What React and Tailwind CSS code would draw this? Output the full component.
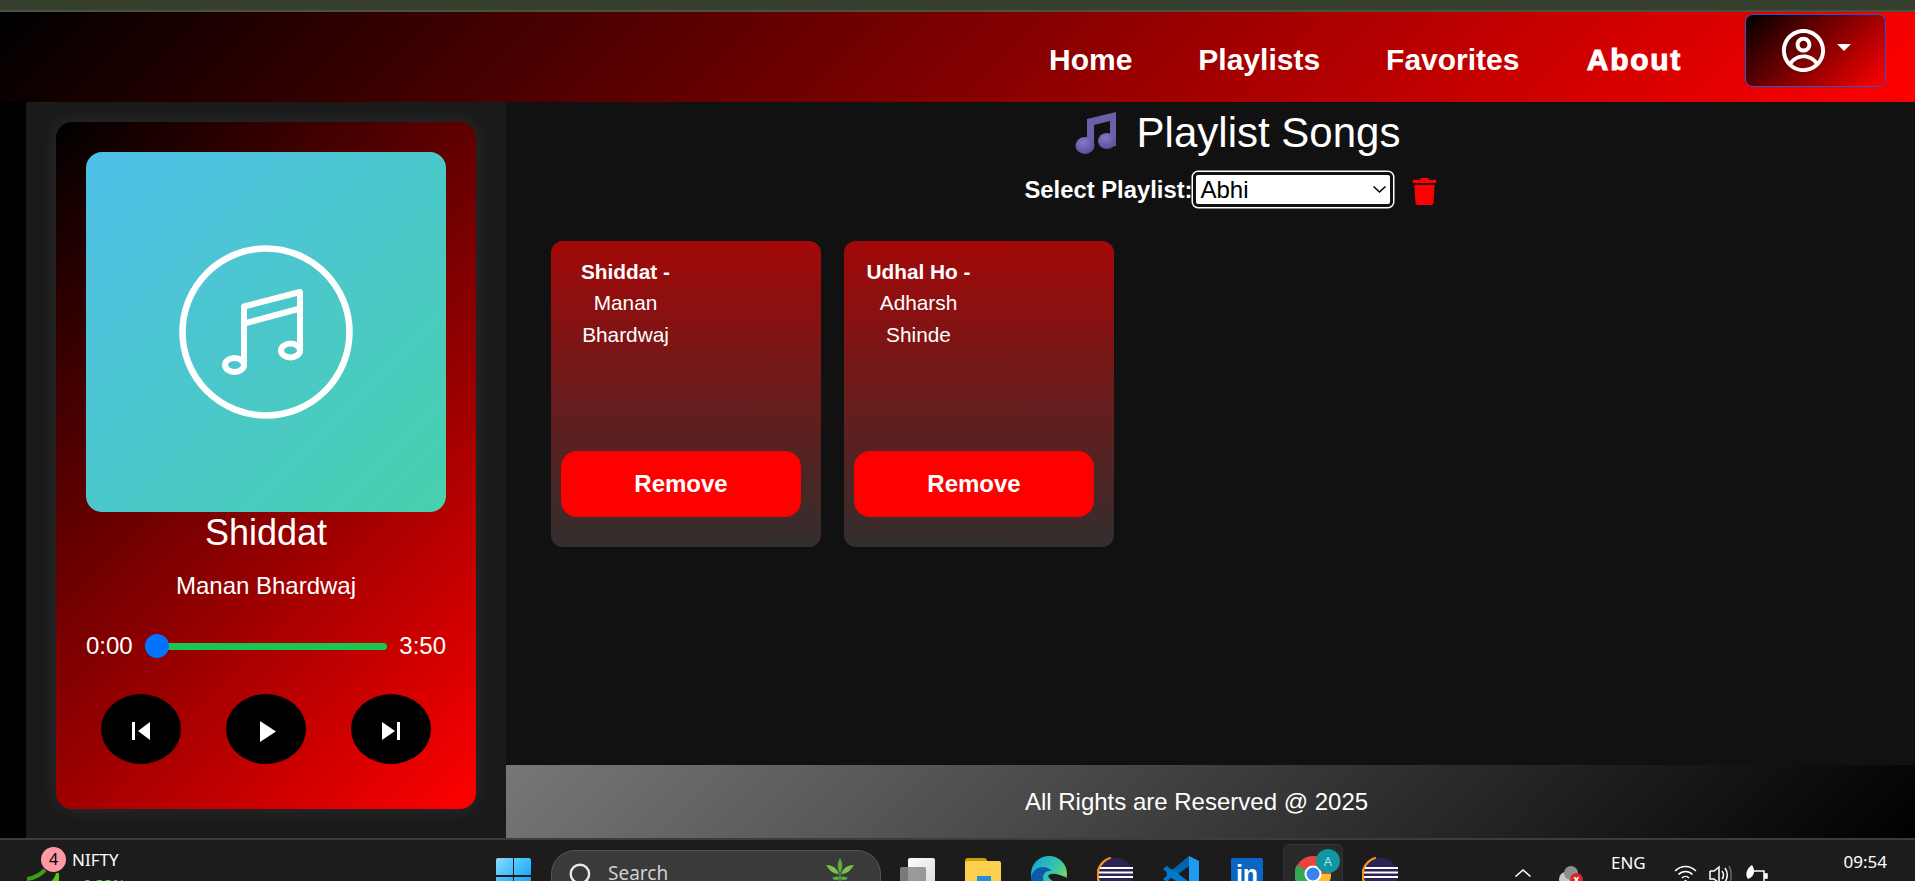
import { CgProfile } from "react-icons/cg";
import { FaTrash } from "react-icons/fa";

const songs = [
  { title: "Shiddat", artist: "Manan Bhardwaj" },
  { title: "Udhal Ho", artist: "Adharsh Shinde" },
];

function AlbumIcon() {
  return (
    <svg viewBox="0 0 180 180" className="w-[180px] h-[180px]" fill="none" stroke="white" strokeLinejoin="round">
      <circle cx="90" cy="90" r="83.5" strokeWidth="6.5" />
      <path d="M68 121 V64.5 L124 50 V108 M68 81.5 L124 66.5" strokeWidth="6" />
      <ellipse cx="58.5" cy="123" rx="9.5" ry="7" strokeWidth="6" />
      <ellipse cx="114.5" cy="108.5" rx="9.5" ry="7" strokeWidth="6" />
    </svg>
  );
}

function NoteEmoji() {
  return (
    <svg viewBox="0 0 41 42" className="w-[41px] h-[42px] shrink-0">
      <defs>
        <radialGradient id="head" cx="0.4" cy="0.3" r="0.8">
          <stop offset="0" stopColor="#8278c4" />
          <stop offset="1" stopColor="#544a94" />
        </radialGradient>
      </defs>
      <path d="M12 7 L41 0 V34 H35 V9 L19 13 V36 H12 Z" fill="#6a5fa8" />
      <ellipse cx="10" cy="33.5" rx="9.5" ry="8.5" fill="url(#head)" />
      <ellipse cx="32" cy="29" rx="9" ry="8" fill="url(#head)" />
    </svg>
  );
}

function Eclipse() {
  return (
    <svg viewBox="0 0 36 36" className="w-[36px] h-[36px]">
      <path d="M14 1 A17.5 17.5 0 0 0 14 35" fill="none" stroke="#f7941e" strokeWidth="2.5" />
      <circle cx="19" cy="18" r="17" fill="#2c2255" />
      <rect x="3" y="10" width="33" height="2" fill="#fff" />
      <rect x="2" y="14.5" width="34" height="2" fill="#fff" />
      <rect x="2" y="19" width="34" height="2" fill="#fff" />
    </svg>
  );
}

function Taskbar() {
  return (
    <div className="h-[43px] shrink-0 flex items-start overflow-hidden bg-[#1c1c1c] border-t-2 border-[#3c3c3c] font-['Noto_Sans','Open_Sans',sans-serif] text-white">
      {/* stock widget */}
      <div className="relative ml-[27px] w-[105px] h-[41px] shrink-0">
        <svg viewBox="0 0 36 14" className="absolute left-0 top-[28px] w-[36px] h-[14px]" fill="none" stroke="#3aa012" strokeWidth="4">
          <path d="M0 11 C8 10 13 7 18 2" />
          <path d="M23 14 C26 12 28 9 29 5 H32 V14 Z" fill="#5fc21a" stroke="none" />
        </svg>
        <span className="absolute left-[14px] top-[7px] w-[25px] h-[25px] rounded-full bg-[#ff99a4] text-black text-[16px] leading-[25px] text-center">4</span>
        <span className="absolute left-[45px] top-[8px] text-[17px] leading-[24px]">NIFTY</span>
        <span className="absolute left-[56px] top-[34px] text-[15px] leading-[20px] text-[#6cc644]">0.33%</span>
      </div>

      {/* start */}
      <div className="ml-[364px] mt-[18px] w-[35px] shrink-0 grid grid-cols-2 gap-[1.5px]">
        <div className="h-[17px] rounded-tl-[2px] bg-[linear-gradient(135deg,#8ddcff,#37b8fb)]" />
        <div className="h-[17px] rounded-tr-[2px] bg-[linear-gradient(135deg,#5cd0ff,#1ea7fd)]" />
        <div className="h-[17px] bg-[linear-gradient(135deg,#4cc6fd,#1c9ff8)]" />
        <div className="h-[17px] bg-[linear-gradient(135deg,#3bb8fc,#1590f0)]" />
      </div>

      {/* search */}
      <div className="ml-[20px] mt-[10px] w-[330px] h-[60px] shrink-0 flex items-start rounded-[24px] bg-[#3a3a3a] border border-[#555]">
        <svg viewBox="0 0 24 24" className="ml-[16px] mt-[11px] w-[26px] h-[26px]" fill="none" stroke="#e8e8e8" strokeWidth="2.2">
          <circle cx="11" cy="11" r="8.5" />
          <path d="M17 17 L22 22" />
        </svg>
        <span className="ml-[14px] mt-[8px] text-[19px] leading-[28px] text-[#d0d0d0]">Search</span>
        <svg viewBox="0 0 28 26" className="ml-[158px] mt-[7px] w-[28px] h-[26px]" fill="#5ca83a">
          <path d="M14 0 C17 5 17 10 14 16 C11 10 11 5 14 0 Z" />
          <path d="M0 7 C6 7 11 10 13 16 C7 16 3 12 0 7 Z" fill="#7cc04f" />
          <path d="M28 7 C22 7 17 10 15 16 C21 16 25 12 28 7 Z" fill="#7cc04f" />
          <path d="M13 16 H15 V26 H13 Z" fill="#4c8a2e" />
          <path d="M6 20 C9 18 12 18 14 20 C11 23 9 23 6 20 Z" />
          <path d="M22 20 C19 18 16 18 14 20 C17 23 19 23 22 20 Z" />
        </svg>
      </div>

      {/* task view */}
      <div className="relative ml-[19px] mt-[18px] w-[35px] h-[30px] shrink-0">
        <div className="absolute left-[8px] top-0 w-[27px] h-[30px] rounded-[2px] bg-[linear-gradient(135deg,#fff,#d8d8d8)]" />
        <div className="absolute left-0 top-[9px] w-[26px] h-[24px] rounded-[2px] bg-[#8a8a8a]/85" />
      </div>

      {/* folder */}
      <div className="relative ml-[30px] mt-[18px] w-[36px] h-[30px] shrink-0">
        <div className="absolute left-0 top-0 w-[22px] h-[10px] rounded-t-[3px] bg-[#d99a0a]" />
        <div className="absolute left-0 top-[3px] w-[36px] h-[27px] rounded-[2px] bg-[#fdd04f]" />
        <div className="absolute left-[12px] top-[18px] w-[14px] h-[8px] bg-[#2a8fd8]" />
      </div>

      {/* edge */}
      <svg viewBox="0 0 36 36" className="ml-[30px] mt-[16px] w-[36px] h-[36px] shrink-0">
        <defs>
          <linearGradient id="edge" x1="0" y1="0" x2="1" y2="0.6">
            <stop offset="0" stopColor="#0fa5d8" />
            <stop offset="0.6" stopColor="#35c1b0" />
            <stop offset="1" stopColor="#7cdc5a" />
          </linearGradient>
        </defs>
        <circle cx="18" cy="18" r="18" fill="url(#edge)" />
        <path d="M0 22 C2 10 14 8 21 15 C16 14 12 17 12 22 C12 28 16 33 22 36 H14 C6 34 0 30 0 22 Z" fill="#0c59a4" />
        <path d="M17 20 C20 16 28 18 36 22 V25 C30 28 20 27 17 20 Z" fill="#1c1c1c" />
      </svg>

      <div className="ml-[30px] mt-[17px] shrink-0"><Eclipse /></div>

      {/* vs code */}
      <svg viewBox="0 0 36 36" className="ml-[30px] mt-[16px] w-[36px] h-[36px] shrink-0">
        <path d="M26 0 L36 5 V31 L26 36 Z" fill="#1f9cf0" />
        <path d="M26 0 V10 L9 23 L3 19 Z" fill="#0065a9" />
        <path d="M26 36 V26 L9 13 L3 17 Z" fill="#007acc" />
        <path d="M0 13 L4 10 L12 17 L4 26 L0 23 L6 18 Z" fill="#0078c8" />
      </svg>

      {/* linkedin */}
      <div className="ml-[32px] mt-[18px] w-[32px] h-[32px] shrink-0 rounded-[2px] bg-[#0a66c2] text-center font-['Liberation_Sans',sans-serif] font-bold text-[25px] leading-[32px]">in</div>

      {/* chrome, active */}
      <div className="relative ml-[20px] mt-[4px] w-[60px] h-[50px] shrink-0 rounded-[6px] bg-[#292929] border border-[#333]">
        <svg viewBox="0 0 36 36" className="absolute left-[11px] top-[11px] w-[36px] h-[36px]">
          <circle cx="18" cy="18" r="18" fill="#e8453c" />
          <path d="M18 18 L2 9 A18 18 0 0 0 14 36 Z" fill="#34a853" />
          <path d="M18 18 H36 A18 18 0 0 1 14 36 Z" fill="#fbc02d" />
          <circle cx="18" cy="18" r="8.5" fill="#fff" />
          <circle cx="18" cy="18" r="6.5" fill="#3b82f0" />
        </svg>
        <span className="absolute left-[32px] top-[4px] w-[24px] h-[24px] rounded-full bg-[#0f96a0] text-[#a8e0e4] text-[13px] leading-[24px] text-center">A</span>
      </div>

      <div className="ml-[19px] mt-[17px] shrink-0"><Eclipse /></div>

      {/* tray */}
      <svg viewBox="0 0 16 8" className="ml-[117px] mt-[29px] w-[16px] h-[8px] shrink-0" fill="none" stroke="white" strokeWidth="1.5">
        <path d="M0.5 7.5 L8 1 L15.5 7.5" />
      </svg>
      <div className="relative ml-[28px] mt-[26px] w-[24px] h-[20px] shrink-0">
        <div className="absolute left-0 top-[6px] w-[16px] h-[14px] rounded-full bg-[#c9c9c9]" />
        <div className="absolute left-[5px] top-0 w-[14px] h-[14px] rounded-full bg-[#8f8f8f]" />
        <div className="absolute left-[11px] top-[7px] w-[13px] h-[13px] rounded-full bg-[#d9252f] text-white text-[10px] leading-[12px] text-center font-bold">x</div>
      </div>
      <div className="ml-[28px] mt-[11px] w-[34px] shrink-0 text-[17px] leading-[24px] text-center">
        <div>ENG</div>
        <div>IN</div>
      </div>
      <svg viewBox="0 0 23 18" className="ml-[29px] mt-[25px] w-[23px] h-[18px] shrink-0" fill="none" stroke="white" strokeWidth="1.6">
        <path d="M1 6 C7 0 16 0 22 6" />
        <path d="M4.5 9.5 C8.5 5.5 14.5 5.5 18.5 9.5" />
        <path d="M8 13 C10 11 13 11 15 13" />
        <circle cx="11.5" cy="16" r="1.2" fill="white" stroke="none" />
      </svg>
      <svg viewBox="0 0 23 18" className="ml-[12px] mt-[25px] w-[23px] h-[18px] shrink-0" fill="none" stroke="white" strokeWidth="1.5">
        <path d="M1 6 H5 L10 2 V18 M1 6 V14 H5 L10 18" />
        <path d="M13 6 C15 8 15 12 13 14" />
        <path d="M16 3 C19 7 19 13 16 17" />
        <path d="M20 1 C23 6 23 14 20 19" stroke="#666" />
      </svg>
      <svg viewBox="0 0 24 18" className="ml-[13px] mt-[25px] w-[24px] h-[18px] shrink-0" fill="none" stroke="white" strokeWidth="1.5">
        <path d="M9 6 H19 V17 H4" />
        <path d="M19 9 H22 V13 H19" fill="white" />
        <path d="M7 0 C1 4 0 10 3 14 C9 12 11 6 7 0 Z" fill="white" stroke="none" />
      </svg>
      <div className="ml-auto mr-[28px] mt-[10px] shrink-0 text-right text-[17px] leading-[24px]">
        <div>09:54</div>
        <div className="mt-[4px]">01-07-2025</div>
      </div>
    </div>
  );
}

export default function App() {
  return (
    <div className="h-screen flex flex-col overflow-hidden bg-black text-white font-['Liberation_Sans',Arial,sans-serif]">
      <div className="h-[10px] shrink-0 bg-[#363f2e]" />
      <div className="h-[2px] shrink-0 bg-[#4a5240]" />

      {/* navbar */}
      <div className="h-[90px] shrink-0 flex items-start justify-end gap-[66px] pr-[29px] bg-[linear-gradient(135deg,#000,#f00)] text-[30px] font-bold">
        <a className="mt-[25px]">Home</a>
        <a className="mt-[25px]">Playlists</a>
        <a className="mt-[25px]">Favorites</a>
        <a className="mt-[25px] ml-[1.4px] tracking-[1.7px] [-webkit-text-stroke:1px_white]">About</a>
        <button className="-ml-[3px] mt-[2px] w-[141px] h-[73px] flex items-center justify-center gap-[10px] rounded-[8px] border-[1.5px] border-[#2b55c8] bg-[linear-gradient(135deg,#000,#f00)]">
          <CgProfile size={47} />
          <span className="-mt-[6px] border-t-[7px] border-x-[7px] border-x-transparent border-t-white" />
        </button>
      </div>

      <div className="flex-1 min-h-0 flex">
        <div className="w-[26px] shrink-0 bg-black" />

        {/* player */}
        <div className="w-[480px] shrink-0 bg-[#1a1a1a] px-[30px] pt-[20px]">
          <div className="h-[687px] rounded-[16px] p-[30px] bg-[linear-gradient(135deg,#000,#f00)] shadow-[0_0_20px_rgba(255,255,255,0.08)]">
            <div className="h-[360px] rounded-[16px] flex items-center justify-center bg-[linear-gradient(135deg,#4fbfe9,#47d0ad)]">
              <AlbumIcon />
            </div>
            <div className="h-[42px] text-center text-[36px] leading-[42px]">Shiddat</div>
            <div className="mt-[16px] h-[32px] text-center text-[24px] leading-[32px]">Manan Bhardwaj</div>
            <div className="mt-[32px] h-[24px] flex items-center justify-between text-[24px]">
              <span>0:00</span>
              <div className="relative w-[242px] h-[7px] rounded-full bg-[#17c653]">
                <div className="absolute left-0 top-[-8.5px] w-[24px] h-[24px] rounded-full bg-[#0073ff]" />
              </div>
              <span>3:50</span>
            </div>
            <div className="mt-[36px] px-[15px] flex justify-between">
              <button className="w-[80px] h-[70px] rounded-[50%] bg-black flex items-center justify-center">
                <svg viewBox="0 0 18 18" className="mt-[4px] w-[18px] h-[18px]" fill="white">
                  <rect x="0" y="0" width="3" height="18" />
                  <path d="M18 0 V18 L6 9 Z" />
                </svg>
              </button>
              <button className="w-[80px] h-[70px] rounded-[50%] bg-black flex items-center justify-center">
                <svg viewBox="0 0 16 21" className="ml-[3px] mt-[4px] w-[16px] h-[21px]" fill="white">
                  <path d="M0 0 L16 10.5 L0 21 Z" />
                </svg>
              </button>
              <button className="w-[80px] h-[70px] rounded-[50%] bg-black flex items-center justify-center">
                <svg viewBox="0 0 18 18" className="mt-[4px] w-[18px] h-[18px]" fill="white">
                  <path d="M0 0 V18 L13 9 Z" />
                  <rect x="15" y="0" width="3" height="18" />
                </svg>
              </button>
            </div>
          </div>
        </div>

        {/* playlist content */}
        <div className="flex-1 min-w-0 flex flex-col bg-[#111]">
          <div className="flex-1 min-h-0">
            <div className="pl-[54px] pt-[9px] h-[52px] flex items-center justify-center gap-[21px]">
              <NoteEmoji />
              <h2 className="text-[42px] leading-[48px]">Playlist Songs</h2>
            </div>
            <div className="mt-[18px] pl-[54px] pr-[12px] flex items-center justify-center">
              <label className="text-[23.8px] font-bold whitespace-nowrap">Select Playlist:</label>
              <div className="relative ml-[1px]">
                <select className="block appearance-none w-[200px] h-[35px] pl-[4px] rounded-[5px] bg-white text-black text-[24px] leading-[28px] border-[3px] border-[#111] shadow-[0_0_0_1.5px_white]">
                  <option>Abhi</option>
                </select>
                <svg viewBox="0 0 13 7" className="absolute right-[7px] top-[14px] w-[13px] h-[7px]" fill="none" stroke="black" strokeWidth="1.5">
                  <path d="M0.5 0.5 L6.5 6 L12.5 0.5" />
                </svg>
              </div>
              <FaTrash size={27} className="ml-[18px] mt-[4px] text-[#f00]" />
            </div>
            <div className="mt-[33px] pl-[45px] flex gap-[23px]">
              {songs.map((song) => (
                <div key={song.title} className="w-[270px] h-[306px] rounded-[12px] flex flex-col bg-[linear-gradient(to_bottom,#a30808,#332e2e)]">
                  <p className="ml-[1.5px] w-[146px] pt-[15.5px] text-center text-[20.8px] leading-[31.2px]">
                    <b>{song.title} - </b>{song.artist}
                  </p>
                  <button className="mt-auto mb-[30px] ml-[10px] w-[240px] h-[66px] rounded-[16px] bg-[#f00] text-[24px] font-bold">
                    Remove
                  </button>
                </div>
              ))}
            </div>
          </div>
          <div className="h-[73px] shrink-0 flex items-center justify-center pr-[28px] text-[24px] bg-[linear-gradient(135deg,#777,#000)]">
            All Rights are Reserved @ 2025
          </div>
        </div>
      </div>

      <Taskbar />
    </div>
  );
}
